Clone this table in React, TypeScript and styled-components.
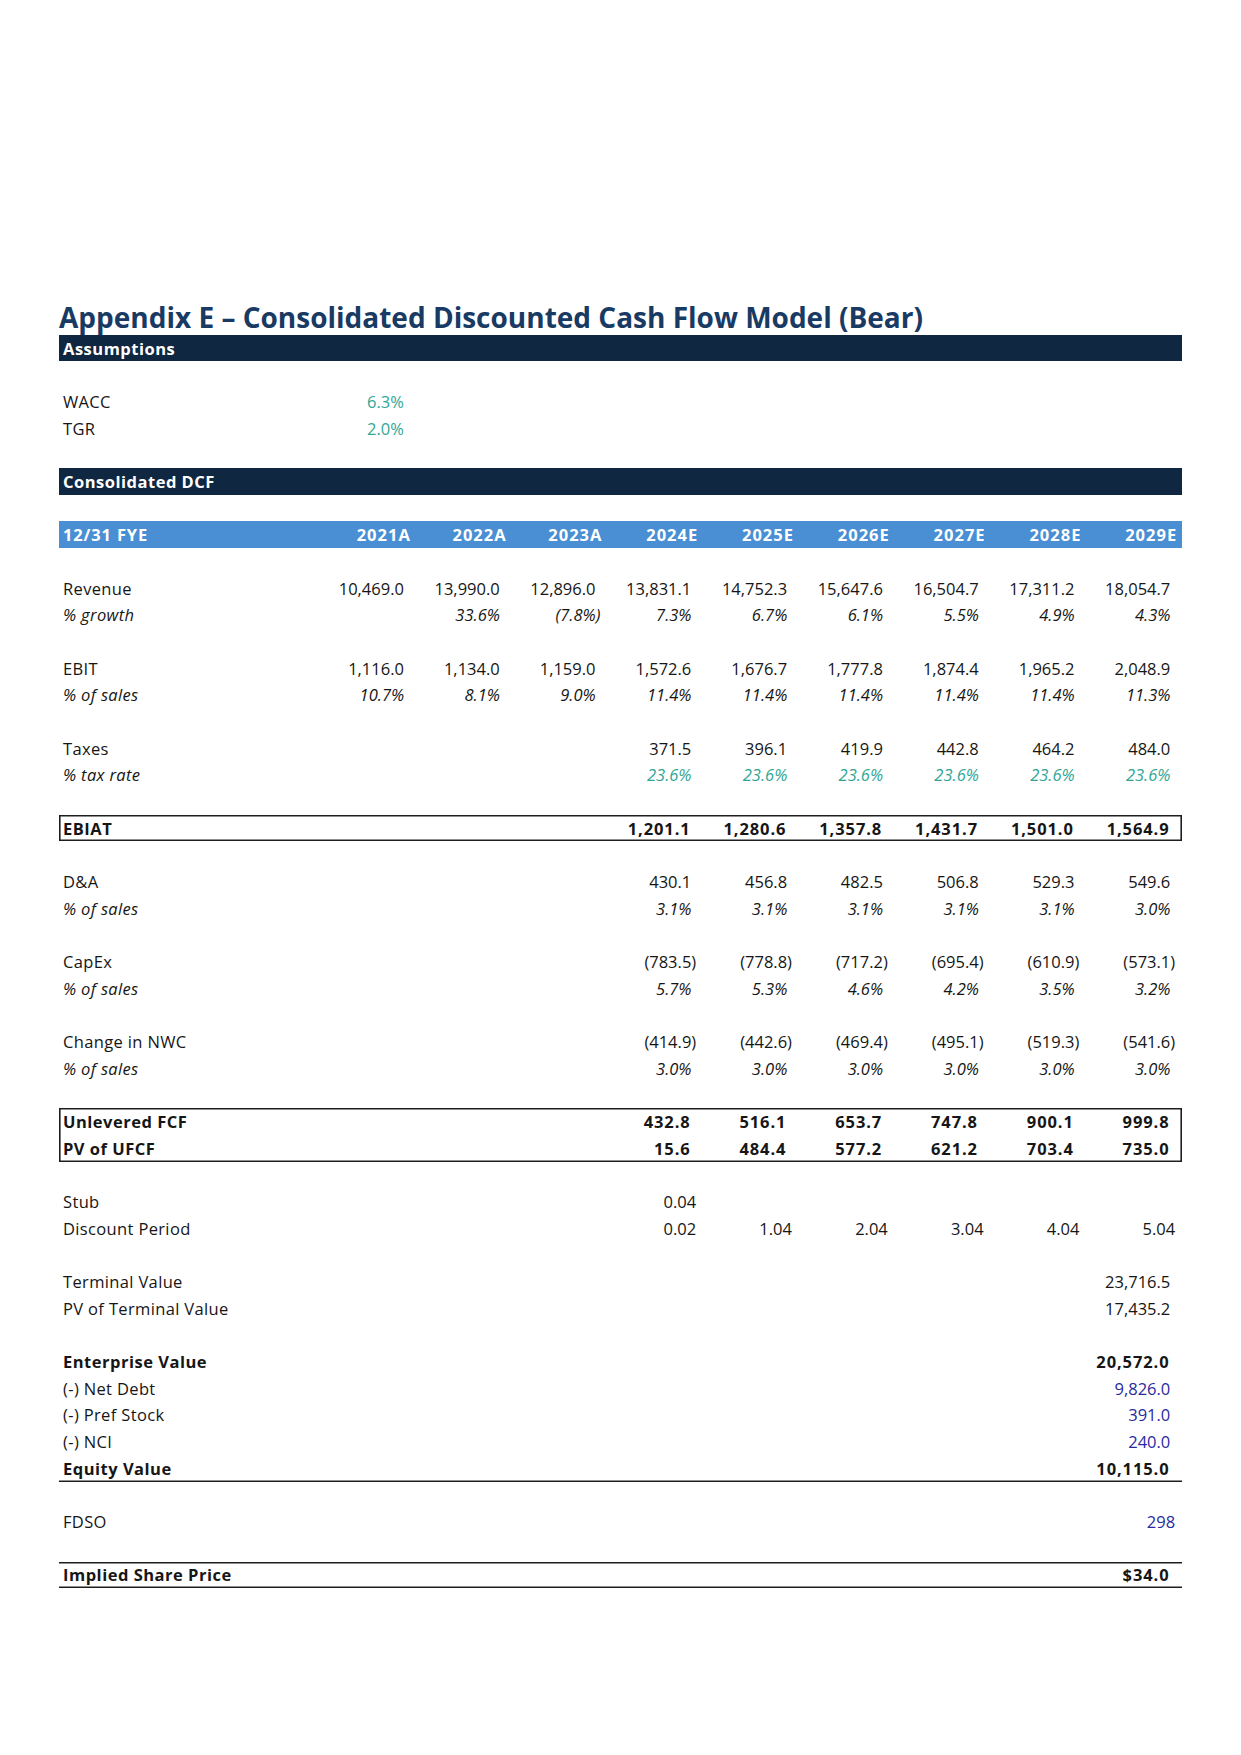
import React from "react";
import styled, { createGlobalStyle } from "styled-components";

const ROW = 26.68;

const GlobalStyle = createGlobalStyle`
  html, body { margin: 0; padding: 0; background: #ffffff; }
  body { font-family: "Open Sans", "Noto Sans", Arial, sans-serif; color: #161616; }
`;

type Tone = "ink" | "teal" | "input" | "white";
const tones: Record<Tone, string> = {
  ink: "#161616",
  teal: "#2fa696",
  input: "#2a2a9e",
  white: "#ffffff",
};

const Page = styled.div`
  width: 1123px;
  padding: 300px 0 200px 59px;
  font-size: 16.5px;
`;

const Title = styled.h1`
  margin: 0;
  height: 34.7px;
  line-height: 34px;
  font-size: 28px;
  font-weight: 700;
  color: #183a63;
  white-space: nowrap;
`;

type Variant = "plain" | "dark" | "blue";
const Row = styled.div<{ $variant?: Variant; $rule?: "bottom" | "both" }>`
  display: grid;
  grid-template-columns: 251px repeat(9, 95.8px);
  align-items: center;
  height: ${ROW}px;
  padding: 0 6px 0 4px;
  background: ${(p) =>
    p.$variant === "dark" ? "#0f2740" : p.$variant === "blue" ? "#4a8fd4" : "transparent"};
  box-shadow: ${(p) =>
    p.$rule === "bottom"
      ? "inset 0 -1.6px 0 #1e1e1e"
      : p.$rule === "both"
      ? "inset 0 -1.6px 0 #1e1e1e, inset 0 1.6px 0 #1e1e1e"
      : "none"};
`;

const Gap = styled.div<{ $rows?: number }>`
  height: ${(p) => (p.$rows ?? 1) * ROW}px;
`;

const Box = styled.div`
  box-shadow: inset 0 0 0 1.6px #1e1e1e;
`;

const Label = styled.div<{ $bold?: boolean; $italic?: boolean; $tone?: Tone; $wide?: boolean }>`
  white-space: nowrap;
  font-weight: ${(p) => (p.$bold ? 700 : 400)};
  font-style: ${(p) => (p.$italic ? "italic" : "normal")};
  letter-spacing: ${(p) => (p.$wide ? "0.85px" : p.$bold ? "0.5px" : "0.35px")};
  color: ${(p) => tones[p.$tone ?? "ink"]};
`;

const Cell = styled.div<{ $bold?: boolean; $italic?: boolean; $tone?: Tone; $col?: number }>`
  text-align: right;
  white-space: nowrap;
  padding-right: 1px;
  grid-column: ${(p) => (p.$col ? `${p.$col + 1}` : "auto")};
  font-weight: ${(p) => (p.$bold ? 700 : 400)};
  font-style: ${(p) => (p.$italic ? "italic" : "normal")};
  letter-spacing: ${(p) => (p.$bold ? "0.9px" : "0")};
  margin-right: ${(p) => (p.$bold ? "-0.9px" : "0")};
  color: ${(p) => tones[p.$tone ?? "ink"]};
`;

const Slot = styled.span`
  visibility: hidden;
`;

type CellOpts = { bold?: boolean; italic?: boolean; tone?: Tone; slot?: boolean };

function Value({ v, col, o }: { v: string; col?: number; o: CellOpts }) {
  const slot = o.slot !== false && v !== "" && !v.endsWith(")");
  return (
    <Cell $bold={o.bold} $italic={o.italic} $tone={o.tone} $col={col}>
      {v}
      {slot ? <Slot>)</Slot> : null}
    </Cell>
  );
}

function DataRow({
  label,
  values,
  start = 1,
  labelBold,
  labelItalic,
  o = {},
  variant,
  rule,
}: {
  label: string;
  values: string[];
  start?: number;
  labelBold?: boolean;
  labelItalic?: boolean;
  o?: CellOpts;
  variant?: Variant;
  rule?: "bottom" | "both";
}) {
  return (
    <Row $variant={variant} $rule={rule}>
      <Label $bold={labelBold} $italic={labelItalic}>
        {label}
      </Label>
      {values.map((v, i) => (
        <Value key={i} v={v} col={start + i} o={o} />
      ))}
    </Row>
  );
}

const years = ["2021A", "2022A", "2023A", "2024E", "2025E", "2026E", "2027E", "2028E", "2029E"];

const HeadCell = styled.div`
  text-align: right;
  font-weight: 700;
  color: #ffffff;
  white-space: nowrap;
  letter-spacing: 1px;
  margin-right: -1px;
`;

export default function App() {
  return (
    <>
      <GlobalStyle />
      <Page>
        <Title>Appendix E – Consolidated Discounted Cash Flow Model (Bear)</Title>

        <Row $variant="dark">
          <Label $bold $tone="white">Assumptions</Label>
        </Row>
        <Gap />
        <DataRow label="WACC" values={["6.3%"]} o={{ tone: "teal" }} />
        <DataRow label="TGR" values={["2.0%"]} o={{ tone: "teal" }} />
        <Gap />

        <Row $variant="dark">
          <Label $bold $tone="white">Consolidated DCF</Label>
        </Row>
        <Gap />
        <Row $variant="blue">
          <Label $bold $wide $tone="white">12/31 FYE</Label>
          {years.map((y) => (
            <HeadCell key={y}>{y}</HeadCell>
          ))}
        </Row>
        <Gap />

        <DataRow
          label="Revenue"
          values={["10,469.0", "13,990.0", "12,896.0", "13,831.1", "14,752.3", "15,647.6", "16,504.7", "17,311.2", "18,054.7"]}
        />
        <DataRow
          label="% growth"
          labelItalic
          start={2}
          values={["33.6%", "(7.8%)", "7.3%", "6.7%", "6.1%", "5.5%", "4.9%", "4.3%"]}
          o={{ italic: true }}
        />
        <Gap />
        <DataRow
          label="EBIT"
          values={["1,116.0", "1,134.0", "1,159.0", "1,572.6", "1,676.7", "1,777.8", "1,874.4", "1,965.2", "2,048.9"]}
        />
        <DataRow
          label="% of sales"
          labelItalic
          values={["10.7%", "8.1%", "9.0%", "11.4%", "11.4%", "11.4%", "11.4%", "11.4%", "11.3%"]}
          o={{ italic: true }}
        />
        <Gap />
        <DataRow label="Taxes" start={4} values={["371.5", "396.1", "419.9", "442.8", "464.2", "484.0"]} />
        <DataRow
          label="% tax rate"
          labelItalic
          start={4}
          values={["23.6%", "23.6%", "23.6%", "23.6%", "23.6%", "23.6%"]}
          o={{ italic: true, tone: "teal" }}
        />
        <Gap />
        <Box>
          <DataRow
            label="EBIAT"
            labelBold
            start={4}
            values={["1,201.1", "1,280.6", "1,357.8", "1,431.7", "1,501.0", "1,564.9"]}
            o={{ bold: true }}
          />
        </Box>
        <Gap />
        <DataRow label="D&A" start={4} values={["430.1", "456.8", "482.5", "506.8", "529.3", "549.6"]} />
        <DataRow
          label="% of sales"
          labelItalic
          start={4}
          values={["3.1%", "3.1%", "3.1%", "3.1%", "3.1%", "3.0%"]}
          o={{ italic: true }}
        />
        <Gap />
        <DataRow label="CapEx" start={4} values={["(783.5)", "(778.8)", "(717.2)", "(695.4)", "(610.9)", "(573.1)"]} />
        <DataRow
          label="% of sales"
          labelItalic
          start={4}
          values={["5.7%", "5.3%", "4.6%", "4.2%", "3.5%", "3.2%"]}
          o={{ italic: true }}
        />
        <Gap />
        <DataRow
          label="Change in NWC"
          start={4}
          values={["(414.9)", "(442.6)", "(469.4)", "(495.1)", "(519.3)", "(541.6)"]}
        />
        <DataRow
          label="% of sales"
          labelItalic
          start={4}
          values={["3.0%", "3.0%", "3.0%", "3.0%", "3.0%", "3.0%"]}
          o={{ italic: true }}
        />
        <Gap />
        <Box>
          <DataRow
            label="Unlevered FCF"
            labelBold
            start={4}
            values={["432.8", "516.1", "653.7", "747.8", "900.1", "999.8"]}
            o={{ bold: true }}
          />
          <DataRow
            label="PV of UFCF"
            labelBold
            start={4}
            values={["15.6", "484.4", "577.2", "621.2", "703.4", "735.0"]}
            o={{ bold: true }}
          />
        </Box>
        <Gap />
        <DataRow label="Stub" start={4} values={["0.04"]} o={{ slot: false }} />
        <DataRow
          label="Discount Period"
          start={4}
          values={["0.02", "1.04", "2.04", "3.04", "4.04", "5.04"]}
          o={{ slot: false }}
        />
        <Gap />
        <DataRow label="Terminal Value" start={9} values={["23,716.5"]} />
        <DataRow label="PV of Terminal Value" start={9} values={["17,435.2"]} />
        <Gap />
        <DataRow label="Enterprise Value" labelBold start={9} values={["20,572.0"]} o={{ bold: true }} />
        <DataRow label="(-) Net Debt" start={9} values={["9,826.0"]} o={{ tone: "input" }} />
        <DataRow label="(-) Pref Stock" start={9} values={["391.0"]} o={{ tone: "input" }} />
        <DataRow label="(-) NCI" start={9} values={["240.0"]} o={{ tone: "input" }} />
        <DataRow
          label="Equity Value"
          labelBold
          start={9}
          values={["10,115.0"]}
          o={{ bold: true }}
          rule="bottom"
        />
        <Gap />
        <DataRow label="FDSO" start={9} values={["298"]} o={{ tone: "input", slot: false }} />
        <Gap />
        <DataRow
          label="Implied Share Price"
          labelBold
          start={9}
          values={["$34.0"]}
          o={{ bold: true }}
          rule="both"
        />
      </Page>
    </>
  );
}
